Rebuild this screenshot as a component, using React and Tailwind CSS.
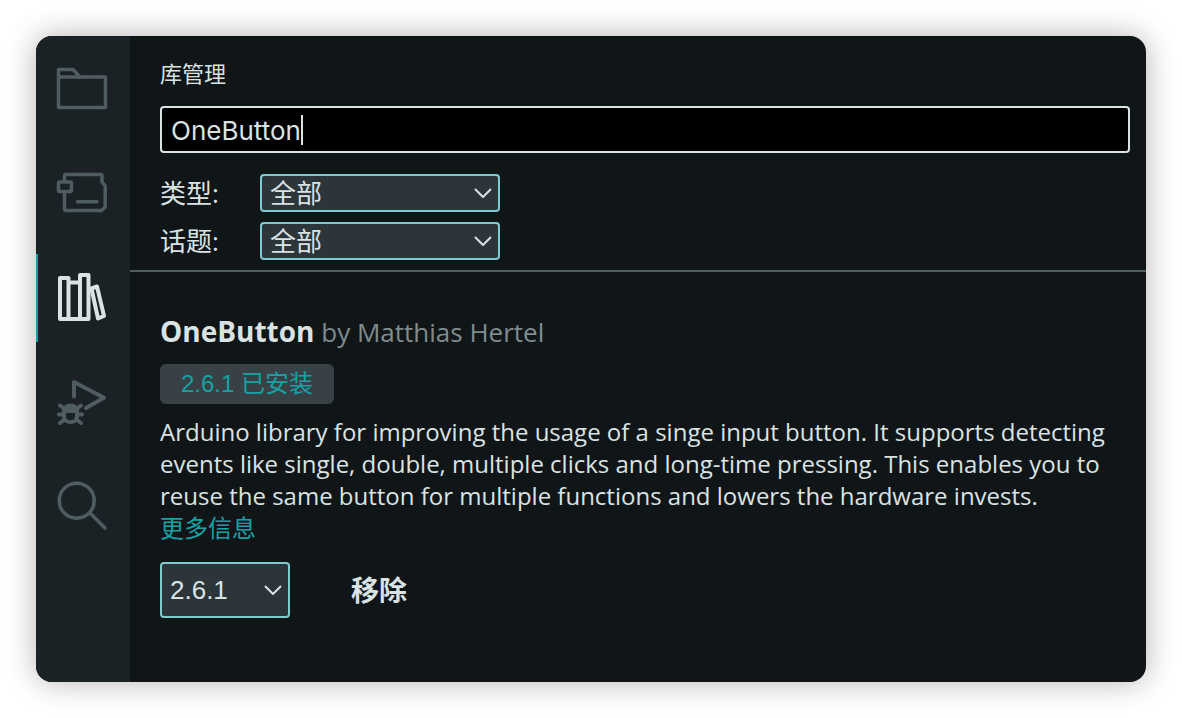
const sans = "font-['Open_Sans','Noto_Sans_CJK_SC',sans-serif]";
const system = "font-['Liberation_Sans','Noto_Sans_CJK_SC',sans-serif]";
const ui = "font-['Inter','Noto_Sans_CJK_SC',sans-serif]";

function FolderIcon() {
  return (
    <svg width="64" height="64" viewBox="0 0 64 64" fill="none" stroke="#4f5c62" strokeWidth="3.5" strokeLinejoin="round">
      <path d="M7.5 49.5V11.5H22L29 19H54.5V49.5Z" />
      <path d="M7.5 19H29" />
    </svg>
  );
}

function BoardIcon() {
  return (
    <svg width="64" height="64" viewBox="0 0 64 64" fill="none" stroke="#4f5c62" strokeWidth="3.5" strokeLinejoin="round" strokeLinecap="round">
      <path d="M13.5 19V14Q13.5 12.5 15 12.5H50Q51 12.5 51 14V20L54.2 24V45L50.5 48.5H15Q13.5 48.5 13.5 47V30" />
      <rect x="7.5" y="20" width="13" height="9.5" rx="1" />
      <path d="M26.5 39.7H46" />
    </svg>
  );
}

function BooksIcon() {
  return (
    <svg width="64" height="64" viewBox="0 0 64 64" fill="none" stroke="#dae3e3" strokeWidth="4" strokeLinejoin="round">
      <rect x="9" y="12" width="8.5" height="41" />
      <path d="M17.5 16.5H29M17.5 53H29" />
      <rect x="29" y="9" width="8.5" height="44" />
      <path d="M40.5 22.5L46 20.5L53 50L47 52.5Z" />
    </svg>
  );
}

function DebugIcon() {
  return (
    <svg width="64" height="64" viewBox="0 0 64 64" fill="none" stroke="#4f5c62" strokeWidth="4" strokeLinejoin="round" strokeLinecap="round">
      <path d="M23 26.5V12L53 27.7L35 38" />
      <path d="M13 41C13 33.5 26 33.5 26 41Z" fill="#4f5c62" />
      <path d="M13 41V46.5C13 54 26 54 26 46.5V41" />
      <path d="M9 35.5L13 38.5M30 35.5L26 38.5M8 44.5H13M31 44.5H26M9 53L13 50M30 53L26 50" />
    </svg>
  );
}

function SearchIcon() {
  return (
    <svg width="64" height="64" viewBox="0 0 64 64" fill="none" stroke="#4f5c62" strokeWidth="3.5" strokeLinecap="round">
      <circle cx="25.7" cy="26.7" r="17.5" />
      <path d="M39 39L54 54" />
    </svg>
  );
}

function Chevron() {
  return (
    <svg width="18" height="10" viewBox="0 0 18 10" fill="none" stroke="#dae3e3" strokeWidth="2">
      <path d="M1 1L9 9L17 1" />
    </svg>
  );
}

function SideTab({ active, children }) {
  return (
    <div className={`h-[88px] flex items-center justify-center border-l-2 pr-[2px] ${active ? "border-[#17a1a5]" : "border-transparent"}`}>
      {children}
    </div>
  );
}

function Select({ label, width, height, mono }) {
  return (
    <div
      className={`flex items-center justify-between rounded-[4px] border-2 border-[#7fcbcd] bg-[#2c353a] text-[#dae3e3] pl-2 pr-[6px] ${width} ${height} ${mono ? system : sans} text-[26px]`}
    >
      <span>{label}</span>
      <Chevron />
    </div>
  );
}

function FilterRow({ label }) {
  return (
    <div className="flex items-center h-[38px]">
      <div className="w-[100px] text-[26px] text-[#dae3e3]">{label}</div>
      <Select label="全部" width="w-[240px]" height="h-[38px]" />
    </div>
  );
}

export default function App() {
  return (
    <div className={`w-[1182px] h-[718px] bg-white p-[36px] ${sans}`}>
      <div className="h-[646px] w-[1110px] flex rounded-[16px] overflow-hidden bg-[#101518] shadow-[0_0_30px_rgba(0,0,0,0.3)]">
        <div className="w-[94px] bg-[#1a2226] pt-[10px] flex flex-col gap-4">
          <SideTab><FolderIcon /></SideTab>
          <SideTab><BoardIcon /></SideTab>
          <SideTab active><BooksIcon /></SideTab>
          <SideTab><DebugIcon /></SideTab>
          <SideTab><SearchIcon /></SideTab>
        </div>
        <div className="flex-1 flex flex-col">
          <div className="pl-[30px] pr-4 pt-[21px]">
            <div className="h-8 leading-8 text-[22px] text-[#dae3e3]">库管理</div>
            <div className={`mt-[17px] h-[47px] rounded-[4px] border-2 border-[#dae3e3] bg-black flex items-center pl-[9px] text-[26px] text-[#dae3e3] ${ui}`}>
              <span className="pt-[2px]">OneButton</span>
              <span className="w-[2px] h-[30px] bg-[#dae3e3]" />
            </div>
            <div className="mt-[21px] flex flex-col gap-[10px]">
              <FilterRow label="类型:" />
              <FilterRow label="话题:" />
            </div>
          </div>
          <div className="mt-[10px] h-[2px] bg-[#4f5c62]" />
          <div className="pl-[30px] pr-4 pt-[43px]">
            <div className="h-8 leading-8 text-[26px] text-[#7f8c8d]">
              <span className="font-bold text-[28px] text-[#dae3e3]">OneButton</span> by Matthias Hertel
            </div>
            <div className={`mt-[17px] w-[174px] h-10 rounded-[6px] bg-[#374146] text-[#17a1a5] text-[24px] flex items-center justify-center ${system}`}>
              2.6.1 已安装
            </div>
            <p className="mt-3 text-[24px] leading-8 text-[#dae3e3]">
              Arduino library for improving the usage of a singe input button. It supports detecting events like single, double, multiple clicks and long-time pressing. This enables you to reuse the same button for multiple functions and lowers the hardware invests.
            </p>
            <div className="text-[24px] leading-8 text-[#17a1a5]">更多信息</div>
            <div className="mt-[18px] flex items-center">
              <Select label="2.6.1" width="w-[130px]" height="h-14" mono />
              <div className="ml-[61px] text-[28px] font-bold text-[#dae3e3]">移除</div>
            </div>
          </div>
        </div>
      </div>
    </div>
  );
}
